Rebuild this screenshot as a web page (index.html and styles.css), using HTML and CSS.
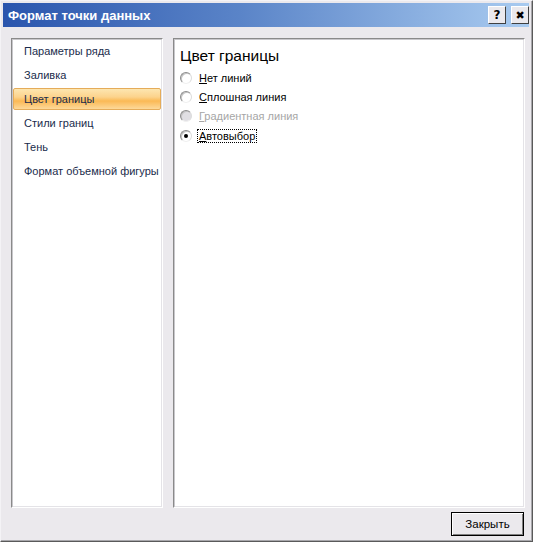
FILE: index.html
```html
<!DOCTYPE html>
<html>
<head>
<meta charset="utf-8">
<link rel="stylesheet" href="styles.css">
</head>
<body>
<div class="window">
  <div class="titlebar">
    <span class="title">Формат точки данных</span>
    <div class="tbtns">
      <span class="tbtn">?</span>
      <span class="tbtn close">&#x2716;</span>
    </div>
  </div>
  <div class="content">
    <div class="panel nav">
      <div class="item">Параметры ряда</div>
      <div class="item">Заливка</div>
      <div class="item sel">Цвет границы</div>
      <div class="item">Стили границ</div>
      <div class="item">Тень</div>
      <div class="item">Формат объемной фигуры</div>
    </div>
    <div class="panel main">
      <div class="heading">Цвет границы</div>
      <div class="opt"><span class="radio"></span><span class="lbl"><u>Н</u>ет линий</span></div>
      <div class="opt"><span class="radio"></span><span class="lbl"><u>С</u>плошная линия</span></div>
      <div class="opt disabled"><span class="radio"></span><span class="lbl"><u>Г</u>радиентная линия</span></div>
      <div class="opt checked"><span class="radio"></span><span class="lbl focus"><u>А</u>втовыбор</span></div>
    </div>
  </div>
  <div class="footer">
    <button class="btn">Закрыть</button>
  </div>
</div>
</body>
</html>
```
FILE: styles.css
```css
html, body {
  margin: 0;
  padding: 0;
  background: #ffffff;
}
body {
  font-family: "Liberation Sans", Arial, sans-serif;
  font-size: 11px;
}
.window {
  width: 533px;
  height: 542px;
  box-sizing: border-box;
  background: #ebe9ed;
  border-top: 1px solid #f4f3f6;
  border-left: 1px solid #f4f3f6;
  border-right: 1px solid #5a5a5a;
  border-bottom: 1px solid #5a5a5a;
  box-shadow: inset -1px -1px 0 #a8a7ab;
  padding: 2px 3px 3px 2px;
  display: flex;
  flex-direction: column;
}
.titlebar {
  height: 24px;
  display: flex;
  align-items: center;
  justify-content: space-between;
  background: linear-gradient(to right, #2a55ad 0%, #5a84c8 45%, #a9cbf0 100%);
  padding: 0 0 0 5px;
}
.title {
  color: #ffffff;
  font-family: "Liberation Sans", Arial, sans-serif;
  font-weight: bold;
  font-size: 13px;
}
.tbtns {
  display: flex;
  gap: 5px;
}
.tbtn {
  width: 18px;
  height: 18px;
  box-sizing: border-box;
  background: #ebe9ed;
  border-top: 1px solid #ffffff;
  border-left: 1px solid #ffffff;
  border-right: 1px solid #404040;
  border-bottom: 1px solid #404040;
  display: flex;
  align-items: center;
  justify-content: center;
  font-family: "DejaVu Sans", sans-serif;
  font-weight: bold;
  font-size: 12px;
  color: #000;
}
.tbtn.close {
  font-size: 11px;
}
.content {
  display: flex;
  gap: 10px;
  padding: 11px 4px 0 8px;
}
.panel {
  height: 470px;
  box-sizing: border-box;
  background: #ffffff;
  border-top: 1px solid #8a8a8a;
  border-left: 1px solid #8a8a8a;
  border-right: 1px solid #ffffff;
  border-bottom: 1px solid #ffffff;
  box-shadow: inset 1px 1px 0 #c8c7cb, inset -1px -1px 0 #e4e3e7;
}
.nav {
  width: 152px;
  padding: 1px 1px 0 1px;
}
.item {
  height: 22px;
  margin-bottom: 2px;
  box-sizing: border-box;
  padding-left: 11px;
  display: flex;
  align-items: center;
  white-space: nowrap;
  color: #1a2c4c;
  font-size: 11px;
}
.item.sel {
  border: 1px solid #e5ac5a;
  border-radius: 2px;
  padding-left: 10px;
  background: linear-gradient(to bottom, #fde6b0 0%, #fcd38c 40%, #fbb955 60%, #fdd99a 100%);
}
.main {
  width: 352px;
  padding: 6px 0 0 6px;
}
.heading {
  font-size: 15.5px;
  color: #000;
  height: 22px;
  line-height: 22px;
  margin-bottom: 1px;
}
.opt {
  height: 19.4px;
  display: flex;
  align-items: center;
  font-size: 11px;
  color: #000;
  white-space: nowrap;
}
.radio {
  width: 12px;
  height: 12px;
  box-sizing: border-box;
  border-radius: 50%;
  background: #ffffff;
  border: 1px solid;
  border-color: #8c8c8c #dcdcdc #f0f0f0 #8c8c8c;
  box-shadow: inset 1px 1px 0 #c4c4c4;
  margin-right: 7px;
  position: relative;
}
.opt.checked .radio::after {
  content: "";
  position: absolute;
  left: 3px;
  top: 3px;
  width: 4px;
  height: 4px;
  border-radius: 50%;
  background: #000;
}
.opt.disabled .radio {
  background: #e0dfe3;
}
.opt.disabled .lbl {
  color: #a6a6a6;
}
.lbl.focus {
  outline: 1px dotted #000;
  outline-offset: 0;
  padding: 0 1px;
  margin-left: -1px;
}
.footer {
  display: flex;
  justify-content: flex-end;
  padding: 4px 5px 0 0;
}
.btn {
  width: 73px;
  height: 24px;
  box-sizing: border-box;
  font-family: "Liberation Sans", Arial, sans-serif;
  font-size: 11.5px;
  color: #000;
  background: #ebe9ed;
  border: 1px solid #000;
  box-shadow: inset 1px 1px 0 #ffffff, inset -1px -1px 0 #808080;
  padding: 0;
}
```
